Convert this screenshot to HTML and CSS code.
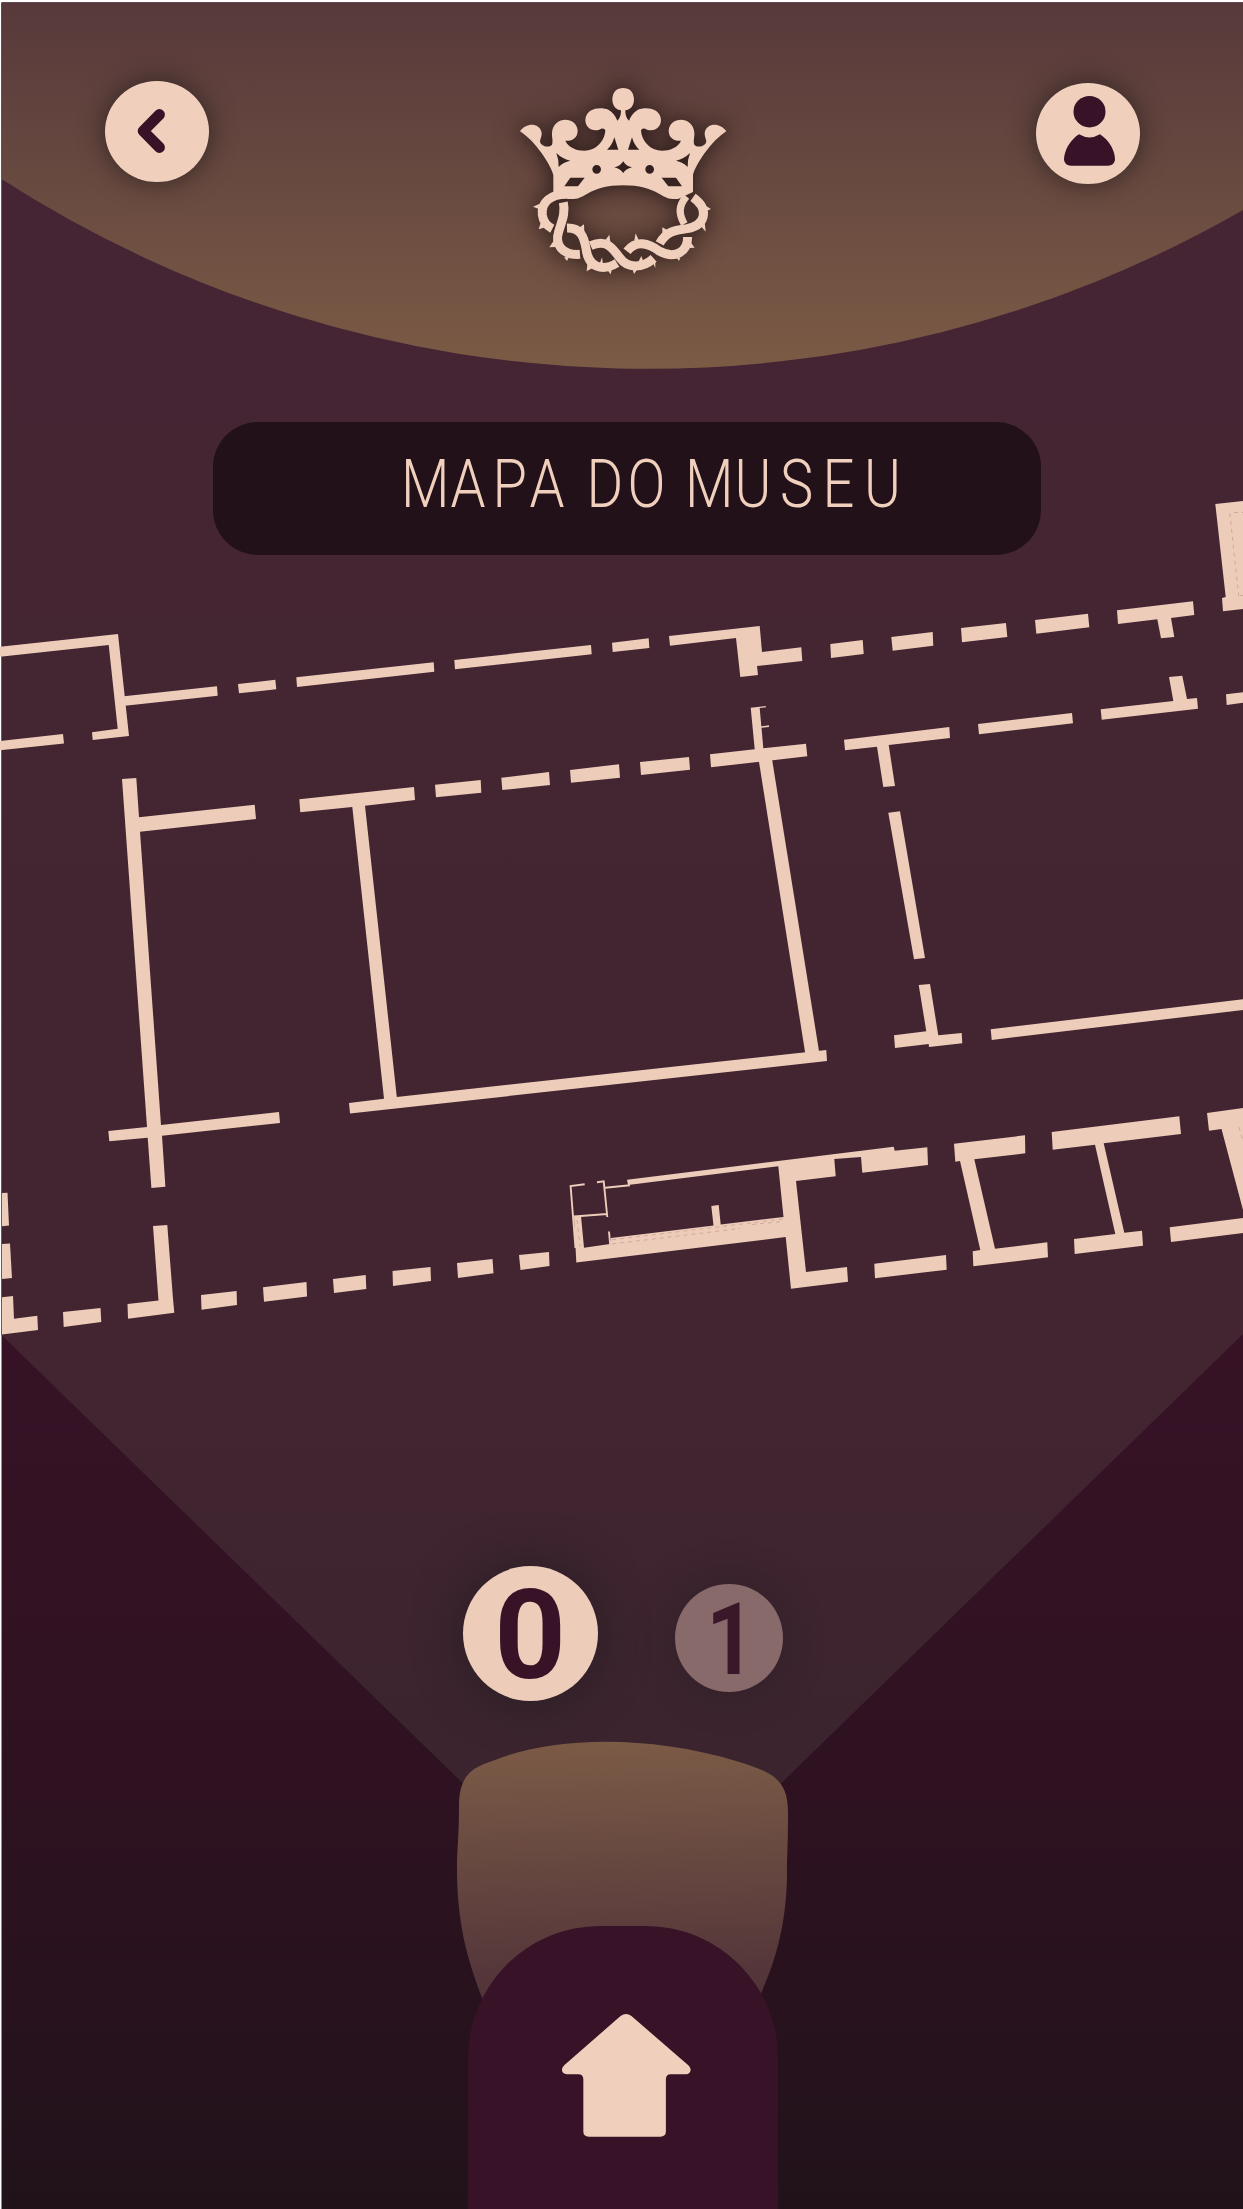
FILE: index.html
```html
<!DOCTYPE html>
<html lang="pt">
<head>
<meta charset="utf-8">
<title>Mapa do Museu</title>
<link rel="stylesheet" href="styles.css">
</head>
<body>
<main class="screen">
  <svg class="backdrop" viewBox="0 0 1243 2209" aria-hidden="true">
    <defs>
      <linearGradient id="night" x1="0" y1="1334" x2="0" y2="2209" gradientUnits="userSpaceOnUse">
        <stop offset="0" stop-color="#371226"/><stop offset=".53" stop-color="#2e1221"/><stop offset="1" stop-color="#21121a"/>
      </linearGradient>
      <linearGradient id="beam" x1="0" y1="370" x2="0" y2="1783" gradientUnits="userSpaceOnUse">
        <stop offset="0" stop-color="#452533"/><stop offset=".7" stop-color="#422530"/><stop offset="1" stop-color="#3b242e"/>
      </linearGradient>
      <linearGradient id="dome" x1="0" y1="3" x2="0" y2="369" gradientUnits="userSpaceOnUse">
        <stop offset="0" stop-color="#57393b"/><stop offset="1" stop-color="#7b5b45"/>
      </linearGradient>
      <linearGradient id="lamp" x1="620" y1="1742" x2="626" y2="2000" gradientUnits="userSpaceOnUse">
        <stop offset="0" stop-color="#7b5b46"/><stop offset="1" stop-color="#503239"/>
      </linearGradient>
    </defs>
    <path fill="url(#night)" d="M1.500 2.500H1243V2209H1.500z"/>
    <path fill="url(#beam)" d="M1.500 2.500H1243V1334L770 1794H474L1.500 1335z"/>
    <path fill="url(#dome)" d="M1.500 2.500H1243V210A1195 1195 0 0 1 1.500 179z"/>
    <g class="walls">
      <path d="M0 646.7 118 634 129 736 92.7 740 92 732.3 117.7 728.7 108.7 645 0 656.7z"/>
      <path d="M0 741 63 734 64 743.5 0 750.3z"/>
      <path d="M124 696.3 217 686.3 217.7 695.7 125 705.7z"/>
      <path d="M238 684 275.3 679.7 276.3 689.3 239 693.3z"/>
      <path d="M296.3 677.3 433.7 662.3 434.3 671.7 297 687z"/>
      <path d="M454.3 660 591 645 591.7 654.3 455 669.3z"/>
      <path d="M612 642.7 648.7 638.3 649.3 648 612.7 652z"/>
      <path d="M669 636 759.7 626 762 652 801.3 647.3 802.3 661 757 666 758 675 740.3 677 736 638 670 645.7z"/>
      <path d="M830.3 644 862.7 640 863.7 654 831 658z"/>
      <path d="M891.3 637 932.7 632 933.3 645.7 892.7 650.7z"/>
      <path d="M961 628 1006 623 1007.3 637 962 642.3z"/>
      <path d="M1035 620 1088 613.7 1089.3 627.3 1036.3 633.7z"/>
      <path d="M1117 610.3 1193 601.3 1194.3 615 1171 618 1174.3 637 1161 638.3 1157.3 619.3 1118 624z"/>
      <path d="M1215.3 504 1243 501V609L1223 611.3 1222 598 1225.7 597z"/>
      <path d="M1169 677 1182.3 675.7 1187 699 1197 698 1198 708.7 1101.7 719.7 1100.7 709.3 1173.3 701z"/>
      <path d="M1226 694.3 1243 692.3V702.7L1226.7 705z"/>
      <path d="M978 724 1072 713 1073 723.3 979 734.3z"/>
      <path d="M844 739.7 949.3 727 950 738 888.7 745 895 786 883.3 787 877 746.7 845 750.3z"/>
      <path d="M888.3 812.7 900 811.3 925 958 914 959.3z"/>
      <path d="M918.7 985 930 984 938.3 1035.3 961.7 1033 962.3 1043.3 929 1047 928.7 1044 895 1048 894 1035.3 926.3 1031.3z"/>
      <path d="M990.7 1029.3 1243 999.3V1010L991.7 1040z"/>
      <path d="M122 779 136.3 778 139 817.3 254.7 804.7 256 819 140 831.7 161 1125 279 1112 280 1123 162 1135.7 165.4 1186.7 151.4 1188 147.7 1137.7 109.3 1141.3 108.3 1131 147 1127z"/>
      <path d="M299.3 799.3 414 787 415 800 365 805.7 396.8 1097 826.3 1050 827 1061 350 1113.5 349 1103 384 1098.7 352.3 807 300.3 812.3z"/>
      <path d="M758.7 760 772 759 819.3 1053 805.5 1055z"/>
      <path d="M435 784.7 480.7 780 481.3 792.7 436 797.3z"/>
      <path d="M501.3 777.7 549 772 550 785 502.3 790z"/>
      <path d="M570 770 619 764.3 620 777.7 571 782.7z"/>
      <path d="M640 762 689 757 690 769.7 641 775z"/>
      <path d="M710 754.3 754.7 749.3 750.7 707.7 765.7 706 766 707.3 759.7 708 761.3 726.3 769 725.3V726.9L761.5 727.8 763.3 748.3 806 743.7 807.3 756.3 711 767.3z"/>
      <path d="M2 1193 7.5 1192.7 9 1225.5 2 1226.3z"/>
      <path d="M2 1244 10 1243.5 12 1278 2 1279z"/>
      <path d="M2 1297.3 13 1296 14 1318.7 37.3 1315.7 38 1330 2 1334.5z"/>
      <path d="M63 1312 100.5 1308 101.3 1322 63.7 1327z"/>
      <path d="M127.5 1304 158.5 1300.5 153 1226 167.3 1225 173 1298.7 174.3 1312.7 128 1318.7z"/>
      <path d="M201 1295 236.6 1291 237 1305 201.5 1309.7z"/>
      <path d="M263 1287.3 306.5 1282 307 1296.5 264 1301.7z"/>
      <path d="M333 1279 365.7 1275 366.3 1289 334 1293z"/>
      <path d="M392.5 1271 430.5 1267 431 1281 393 1286z"/>
      <path d="M457 1263 492.5 1259 493.5 1273.3 458 1278z"/>
      <path d="M519 1255 549 1252 549.5 1266 520.5 1270z"/>
      <path d="M627 1179.7 893.7 1146.7 894.7 1150.7 927.3 1147.3 928 1165 862.3 1172.7 861 1157 834.3 1159 835.7 1176.3 796 1181 806 1272 847 1267 848 1281.7 791 1288.7 785.7 1237 576.3 1262.5 574 1217 581 1216 584 1247.7 610 1244 611 1238 713.5 1225.5 711.3 1206 718.7 1205 720.7 1224.5 783.5 1217 778.3 1166.3 628 1185z"/>
      <path d="M874.3 1263.7 946 1255 946.7 1269.7 875 1278.3z"/>
      <path d="M954 1143.7 1025 1135.3 1025.3 1153.3 974.3 1159.3 995 1248.7 1047.3 1242.3 1048 1257.3 973.3 1266.3 972.7 1251.3 980.3 1250 960 1161 955.3 1161.7z"/>
      <path d="M1051.7 1132 1179.3 1116.3 1181 1134 1103.7 1143.3 1124.3 1232.7 1142 1230.7 1143 1245.7 1074.7 1254 1074 1239 1115.3 1234 1095 1144.7 1052.7 1149.7z"/>
      <path d="M1169.7 1227.3 1243 1218V1233L1171 1242z"/>
      <path d="M1207 1113 1243 1108V1210L1221.5 1129 1209 1130.7z"/>
    </g>
    <path class="partitions" d="M584.7 1184.3 570.6 1186 575.5 1248M597 1182.2 603.7 1181.4 607.3 1217M574 1216.5 607 1214M605 1187.8 630 1185.2M609 1231.5 610.3 1246"/>
    <path class="steps" d="M612 1239.8 783 1219M612 1244 740 1228.5M752 1224.5 783 1221.5M577 1220 580 1246M1229.8 513 1238.7 596M1234 512.5H1243M1240 595.5H1243M1239 1127 1243 1142"/>
    <path fill="url(#lamp)" d="M483 2000C466 1957 457 1920 457 1868C457 1848 459 1840 459 1806C459 1767 481 1766 503 1757C560 1737 650 1735 736 1761C773 1772 788 1780 788 1812C788 1850 787 1850 787 1876C786 1925 776 1962 757 2002L620 2010z"/>
  </svg>

  <header class="topbar">
    <button class="round" aria-label="Voltar">
      <svg viewBox="0 0 104 101"><path d="M54.4 33.6 38.2 50 54.4 66.4" fill="none" stroke="#381226" stroke-width="11" stroke-linecap="round" stroke-linejoin="round"/></svg>
    </button>
    <svg class="crown" viewBox="0 0 738 660" aria-label="Coroa">
      <defs>
        <path id="half" fill-rule="evenodd" d="M60 184C78 158 118 157 125 188C126 206 113 214 126 224C136 232 150 231 156 224C160 212 155 202 156 188C160 137 230 138 233 182C233 204 215 214 196 212C207 237 240 245 265 241C295 235 314 208 316 182C314 174 306 173 298 179C274 187 256 170 256 150C258 112 304 110 325 119C339 127 348 140 352 152C361 144 363 134 363 121C350 120 337 110 337 88C338 65 350 54 370 54V273Q361 289 343 292Q362 297 370 310V346C320 346 290 356 262 371C240 383 235 388 205 387L160 366V315C153 285 105 212 60 184zM169 249Q186 266 211 272Q190 276 176 291Q177 270 169 249zM343 202 355 239.500H321Q337 225 343 202zM277 298a13 13 0 1 0 26 0a13 13 0 1 0-26 0zM211 323H254L234 349H193z"/>
      </defs>
      <use href="#half"/><use href="#half" transform="translate(739 0) scale(-1 1)"/>
      <g fill="none" stroke="#f0cfbd" stroke-width="27">
        <path d="M208 373C150 370 123 398 127 435C130 457 141 468 157 476"/>
        <path d="M190 397C197 430 185 454 176 485C164 522 185 557 240 553"/>
        <path d="M201 474C242 473 252 500 258 535C265 592 306 606 351 579"/>
        <path d="M272 527C319 507 337 532 359 563C384 598 429 594 461 565"/>
        <path d="M381 544C408 509 445 519 479 544C526 569 563 545 563 501"/>
        <path d="M479 520C502 479 532 481 561 476C622 464 625 414 579 382"/>
        <path d="M559 379C536 407 535 431 553 462" stroke-width="22"/>
      </g>
      <path d="M119 401 99 410 118 418zM122 458 116 478 137 472zM160 514 148 532 168 531zM192 562 201 573 207 561zM236 474 252 463 253 488zM262 582 260 604 282 592zM299 581 306 562 309 583zM322 600 332 613 335 600zM317 509 328 494 331 515zM398 599 402 612 411 599zM403 511 407 490 416 510zM416 574 424 558 431 577zM457 576 466 594 466 573zM487 491V472L508 484zM531 565 537 573 541 563zM572 517 584 533 569 534zM602 467 617 485 614 455zM617 407 633 417 617 424z"/>
    </svg>
    <button class="round round-user" aria-label="Perfil">
      <svg viewBox="0 0 104 101"><g fill="#381226"><ellipse cx="53.500" cy="28.700" rx="16" ry="15.700"/><path d="M43 51.300Q53.500 57.500 64 51.300C74 58 79 68 79 77Q78 82.700 72 82.700H35Q29 82.700 28 77C28 68 34 57 43 51.300z"/></g></svg>
    </button>
  </header>

  <h1 class="title">
    <svg viewBox="0 0 828 133"><text transform="translate(188 85) scale(.83 1)" x="0 59.6 110.2 154.8 195 223.5 272.9 315 342.2 401.8 456.6 507.8 557.8" font-size="67.500">MAPA DO MUSEU</text></svg>
  </h1>

  <nav class="floors">
    <button class="floor floor-active"><span>0</span></button>
    <button class="floor"><span>1</span></button>
  </nav>

  <footer class="dock">
    <a class="home" aria-label="Início">
      <svg viewBox="0 0 130 124"><path d="M59 2Q64.500-2 70 2L127 51.500C132 56 129 60.700 125 60.700H109.500Q104.700 60.700 104.700 66V118.500Q104.700 123.700 99 123.700H27Q21.500 123.700 21.500 118.500V66Q21.500 60.700 16.500 60.700H5C0 60.700-2 56 2.500 51.500z"/></svg>
    </a>
  </footer>
</main>
</body>
</html>
```
FILE: styles.css
```css
* { box-sizing: border-box; }
body { margin: 0; background: #fff; font-family: Roboto, "Liberation Sans", sans-serif; }
button { border: 0; padding: 0; }
svg { display: block; overflow: visible; }

.screen {
  position: relative;
  isolation: isolate;
  width: 1243px;
  height: 2209px;
  overflow: hidden;
  display: flex;
  flex-direction: column;
  align-items: center;
}
.backdrop { position: absolute; inset: 0; z-index: -1; width: 1243px; height: 2209px; }
.walls { fill: #eeccba; }
.partitions { fill: none; stroke: #eeccba; stroke-width: 1.9; }
.steps { fill: none; stroke: #d0a99c; stroke-width: 1; stroke-dasharray: 4 4; }

.topbar {
  width: 100%;
  height: 422px;
  flex: none;
  padding: 70px 103px 0 104.5px;
  display: flex;
  justify-content: space-between;
  align-items: flex-start;
}
.round {
  width: 104px;
  height: 101px;
  margin-top: 11px;
  border-radius: 50%;
  background: #f0cfbd;
  box-shadow: 0 0 24px 2px rgba(34, 28, 26, .65);
}
.round-user { margin-top: 13px; }
.crown {
  width: 246px;
  height: 220px;
  margin-left: 2px;
  fill: #f0cfbd;
  filter: drop-shadow(0 0 9px rgba(34, 20, 20, .7)) drop-shadow(0 0 14px rgba(34, 20, 20, .4));
}

.title {
  width: 828px;
  height: 133px;
  flex: none;
  margin: 0 0 0 11px;
  border-radius: 45px;
  background: #221118;
  font-weight: 300;
}
.title text { fill: #f0cfbd; }

.floors {
  flex: none;
  margin: 1011px 0 0 3px;
  width: 320px;
  height: 135px;
  display: flex;
  justify-content: space-between;
  align-items: center;
}
.floor {
  display: grid;
  place-items: center;
  width: 108px;
  height: 108px;
  margin-top: 9px;
  border-radius: 50%;
  background: #876a69;
  color: #3a182a;
  font: bold 100px/1 Roboto, sans-serif;
  box-shadow: 0 0 40px rgba(34, 28, 34, .45);
}
.floor span { transform: translate(2px, 2px) scaleX(.85); }
.floor-active {
  width: 135px;
  height: 135px;
  margin-top: 0;
  background: #eeccba;
  color: #381226;
  font-size: 125px;
  box-shadow: 0 0 44px 4px rgba(34, 28, 34, .65);
}
.floor-active span { transform: translate(-.5px, 2px); }

.dock {
  flex: none;
  width: 310px;
  height: 283px;
  margin: 225px 0 0 3px;
  padding-top: 88px;
  border-radius: 132px 132px 0 0;
  background: #381226;
}
.home { display: block; width: 129px; margin-left: 94px; fill: #f0cfbd; }
```
